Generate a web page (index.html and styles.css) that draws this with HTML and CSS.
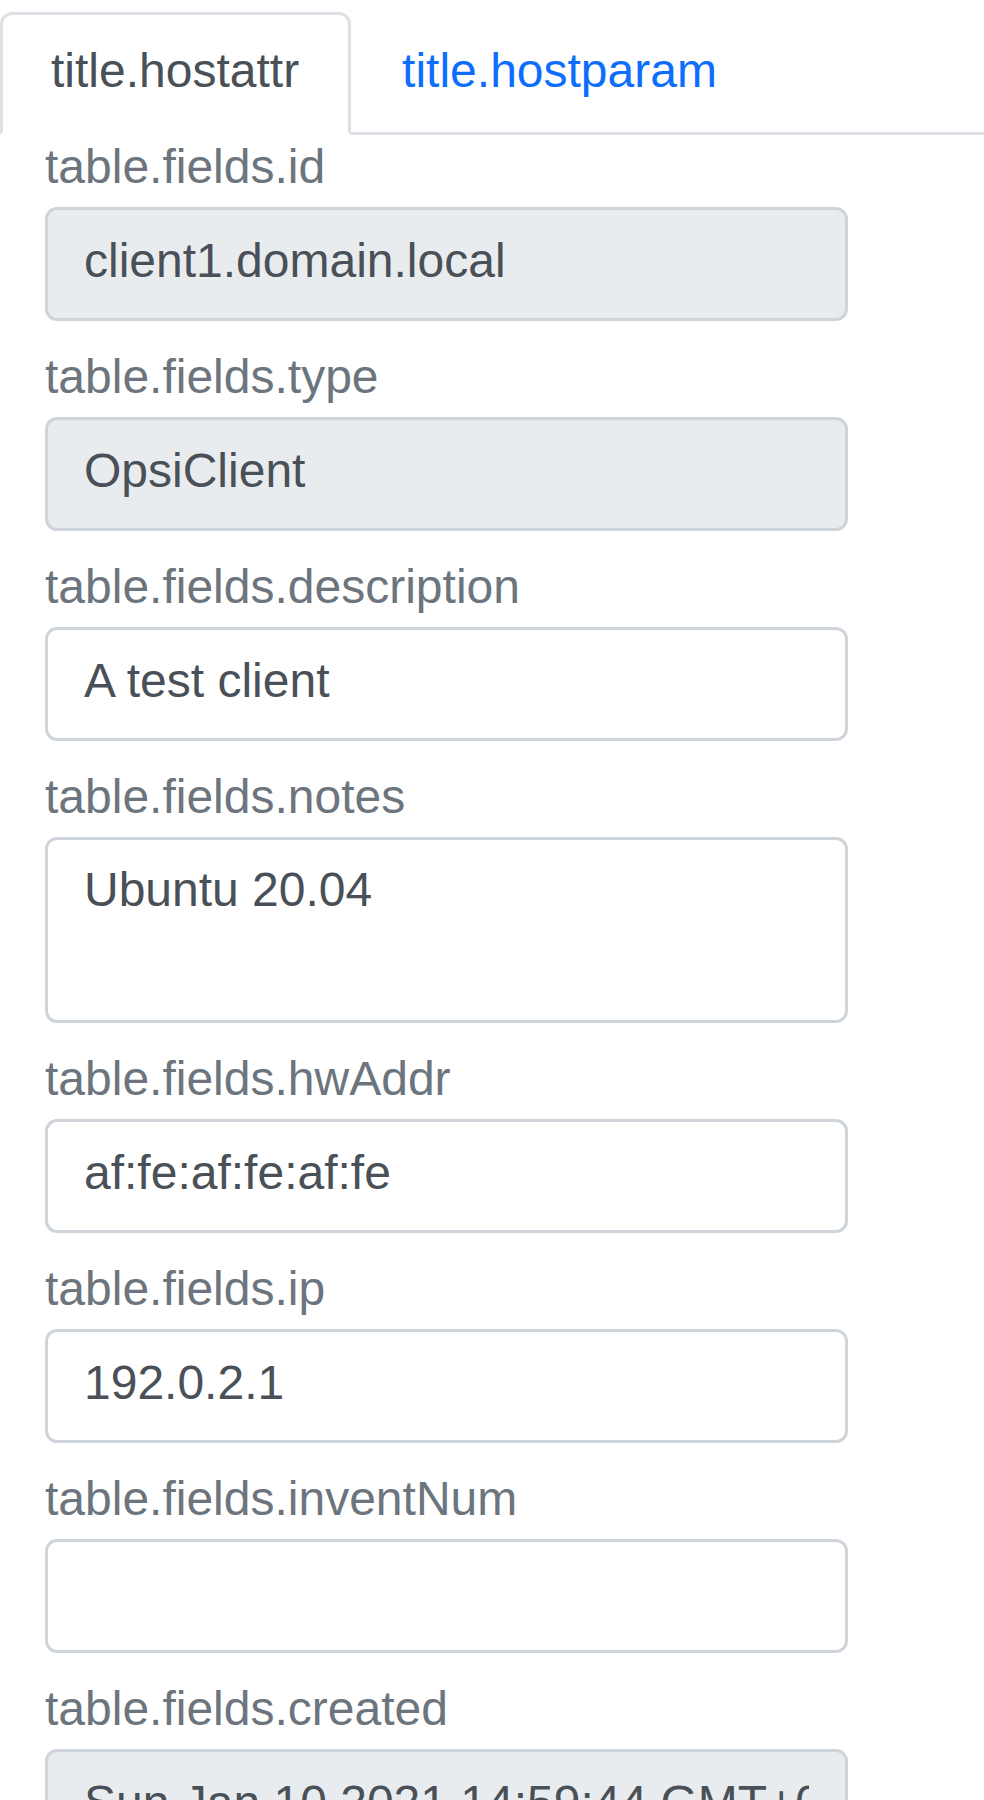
FILE: index.html
```html
<!DOCTYPE html>
<html lang="en">
<head>
<meta charset="utf-8">
<title>Host</title>
<link rel="stylesheet" href="styles.css">
</head>
<body>
<ul class="nav-tabs">
  <li class="nav-item"><a class="nav-link active">title.hostattr</a></li>
  <li class="nav-item"><a class="nav-link">title.hostparam</a></li>
</ul>
<form class="fields">
  <div class="group first">
    <label class="field-label">table.fields.id</label>
    <input class="field locked" type="text" value="client1.domain.local" readonly>
  </div>
  <div class="group">
    <label class="field-label">table.fields.type</label>
    <input class="field locked" type="text" value="OpsiClient" readonly>
  </div>
  <div class="group">
    <label class="field-label">table.fields.description</label>
    <input class="field" type="text" value="A test client">
  </div>
  <div class="group">
    <label class="field-label">table.fields.notes</label>
    <textarea class="field area" rows="2">Ubuntu 20.04</textarea>
  </div>
  <div class="group">
    <label class="field-label">table.fields.hwAddr</label>
    <input class="field" type="text" value="af:fe:af:fe:af:fe">
  </div>
  <div class="group">
    <label class="field-label">table.fields.ip</label>
    <input class="field" type="text" value="192.0.2.1">
  </div>
  <div class="group">
    <label class="field-label">table.fields.inventNum</label>
    <input class="field" type="text" value="">
  </div>
  <div class="group">
    <label class="field-label">table.fields.created</label>
    <input class="field locked" type="text" value="Sun Jan 10 2021 14:59:44 GMT+0100 (Central European Standard Time)" readonly>
  </div>
</form>
</body>
</html>
```

FILE: styles.css
```css
html, body {
  margin: 0;
  padding: 0;
  background: #ffffff;
  font-family: "Liberation Sans", Arial, sans-serif;
}

.nav-tabs {
  list-style: none;
  margin: 12px 0 0 0;
  padding: 0;
  display: flex;
  border-bottom: 3px solid #dee2e6;
}

.nav-item {
  margin-bottom: -3px;
}

.nav-link {
  display: block;
  font-size: 48px;
  line-height: 72px;
  padding: 20px 49px 25px 48px;
  border: 3px solid transparent;
  border-top-left-radius: 12px;
  border-top-right-radius: 12px;
  color: #0d6efd;
  cursor: pointer;
}

.nav-link.active {
  color: #495057;
  background: #ffffff;
  border-color: #dee2e6 #dee2e6 #ffffff;
}

.fields {
  display: flex;
  flex-direction: column;
  padding: 0 45px;
  width: 803px;
}

.group {
  display: flex;
  flex-direction: column;
  margin-top: 24px;
}

.group.first {
  margin-top: 0;
}

.field-label {
  font-size: 48px;
  line-height: 64px;
  padding-bottom: 8px;
  color: #6c757d;
}

.field {
  box-sizing: border-box;
  width: 803px;
  margin: 0;
  font-family: "Liberation Sans", Arial, sans-serif;
  font-size: 48px;
  line-height: 72px;
  color: #495057;
  background: #ffffff;
  border: 3px solid #ced4da;
  border-radius: 12px;
  padding: 14px 36px 22px 36px;
  height: 114px;
  outline: none;
}

.field.locked {
  background: #e9ecef;
}

.field.area {
  height: 186px;
  resize: none;
  overflow: hidden;
  display: block;
}
```
